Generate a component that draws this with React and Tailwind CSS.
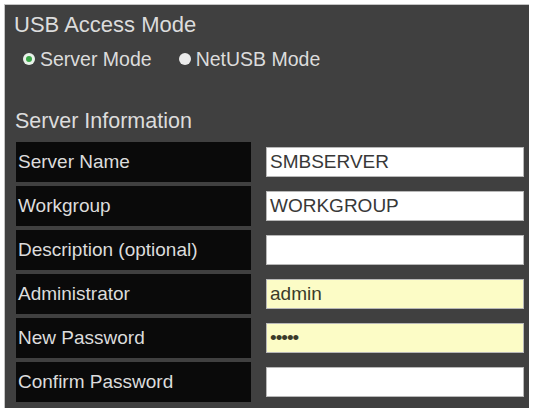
import React from "react";

const rows = [
  { label: "Server Name", value: "SMBSERVER" },
  { label: "Workgroup", value: "WORKGROUP" },
  { label: "Description (optional)", value: "" },
  { label: "Administrator", value: "admin", filled: true },
  { label: "New Password", value: "•••••", filled: true, secret: true },
  { label: "Confirm Password", value: "" },
];

const Radio = ({ checked, label }) => (
  <label className="flex items-center gap-[5px]">
    <span
      className={`flex h-[12px] w-[12px] items-center justify-center rounded-full ${
        checked ? "bg-[#e9f2ea]" : "bg-[#ececec]"
      }`}
    >
      {checked && <span className="h-[6px] w-[6px] rounded-full bg-[#3aa647]" />}
    </span>
    <span>{label}</span>
  </label>
);

const App = () => {
  return (
    <div
      className="min-h-[415px] w-[537px] bg-white pt-[4px] pl-[4px]"
      style={{ fontFamily: '"Liberation Sans", Arial, sans-serif' }}
    >
      <div className="h-[404px] w-[525px] border-t border-l border-[#c4c4c4] bg-[#404040] pt-[7px] text-[#dcdcdc]">
        {/* usb mode */}
        <h2 className="pl-[9px] text-[22px] leading-[26px]">USB Access Mode</h2>
        <div className="mt-[9px] flex items-center gap-[27px] pl-[18px] text-[19.5px] leading-[24px]">
          <Radio checked label="Server Mode" />
          <Radio label="NetUSB Mode" />
        </div>

        {/* server info */}
        <h3 className="mt-[38px] pl-[10px] text-[21.5px] leading-[24px]">Server Information</h3>
        <div className="mt-[9px] flex flex-col gap-[4px] pl-[11px] pr-[5px]">
          {rows.map((row) => (
            <div key={row.label} className="flex h-[40px] items-center gap-[15px]">
              <div className="flex h-full w-[235px] items-center bg-[#0a0a0a] pl-[2px] text-[19px]">
                {row.label}
              </div>
              <div
                className={`flex h-[30px] flex-1 items-center border border-[#b8b8b8] pl-[3px] text-[19px] ${
                  row.filled ? "bg-[#fcfcc6] text-[#3b3b2a]" : "bg-white text-[#383838]"
                } ${row.secret ? "tracking-[-1px]" : ""}`}
              >
                {row.value}
              </div>
            </div>
          ))}
        </div>
      </div>
    </div>
  );
};

export default App;
